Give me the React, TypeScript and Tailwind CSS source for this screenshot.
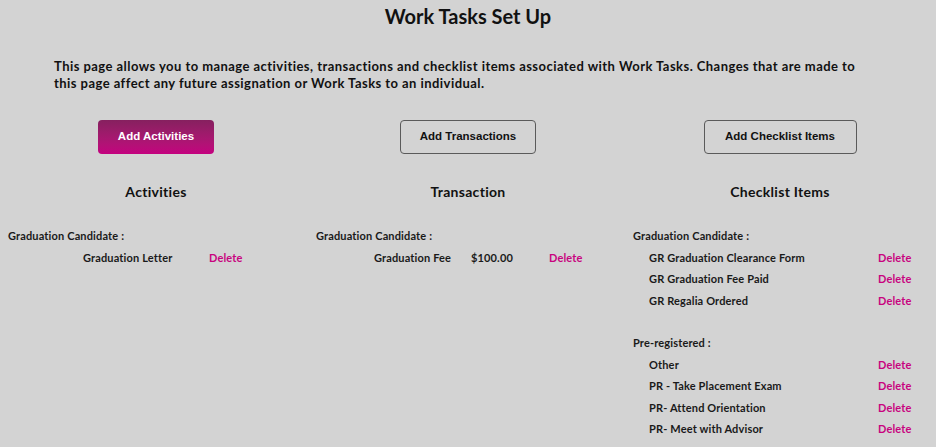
const gothic = "font-['Century_Gothic','Lato','Noto_Sans',sans-serif]";

type Row = { name: string; amount?: string };
type Group = { label: string; rows: Row[] };

function DeleteLink() {
  return <span className="text-[#c8037f] cursor-pointer">Delete</span>;
}

function Column({
  title,
  groups,
  labelPad,
  rowPad,
  nameWidth,
  amountWidth,
}: {
  title: string;
  groups: Group[];
  labelPad: string;
  rowPad: string;
  nameWidth: string;
  amountWidth?: string;
}) {
  return (
    <div className="flex flex-col">
      <h2 className="text-center text-[14px] leading-[20px] font-bold tracking-[0.3px] text-[#111]">{title}</h2>
      <div className="mt-[23px] flex flex-col gap-[21px] text-[11px] font-bold tracking-[0.15px] text-[#1a1a1a]">
        {groups.map((g) => (
          <div key={g.label} className="flex flex-col">
            <div className={`leading-[21.5px] ${labelPad}`}>{g.label}</div>
            {g.rows.map((r) => (
              <div key={r.name} className={`flex leading-[21.5px] ${rowPad}`}>
                <span className={nameWidth}>{r.name}</span>
                {amountWidth && <span className={amountWidth}>{r.amount}</span>}
                <DeleteLink />
              </div>
            ))}
          </div>
        ))}
      </div>
    </div>
  );
}

export default function App() {
  return (
    <div className={`min-h-[447px] w-[936px] bg-[#d3d3d3] ${gothic} text-[#111]`}>
      {/* Header */}
      <h1 className="pt-[2px] text-center text-[20px] leading-[28px] font-bold">Work Tasks Set Up</h1>

      <p className="mt-[28px] px-[54px] text-[13px] leading-[17px] font-bold tracking-[0.45px] whitespace-nowrap">
        This page allows you to manage activities, transactions and checklist items associated with Work Tasks. Changes that are made to
        <br />
        this page affect any future assignation or Work Tasks to an individual.
      </p>

      {/* Action buttons */}
      <div className="mt-[28px] grid grid-cols-3 font-['Liberation_Sans',Arial,sans-serif] text-[11.5px] font-bold">
        <div className="flex justify-center">
          <button className="h-[34px] w-[116px] rounded-[4px] bg-gradient-to-b from-[#86205f] to-[#c4007f] text-white">
            Add Activities
          </button>
        </div>
        <div className="flex justify-center">
          <button className="h-[34px] w-[136px] rounded-[4px] border border-[#5a5a5a] text-[#111]">
            Add Transactions
          </button>
        </div>
        <div className="flex justify-center">
          <button className="h-[34px] w-[153px] rounded-[4px] border border-[#5a5a5a] text-[#111]">
            Add Checklist Items
          </button>
        </div>
      </div>

      {/* Lists */}
      <div className="mt-[28px] grid grid-cols-3">
        <Column
          title="Activities"
          labelPad="pl-[8px]"
          rowPad="pl-[83px]"
          nameWidth="w-[126px]"
          groups={[{ label: "Graduation Candidate :", rows: [{ name: "Graduation Letter" }] }]}
        />
        <Column
          title="Transaction"
          labelPad="pl-[4px]"
          rowPad="pl-[62px]"
          nameWidth="w-[97px]"
          amountWidth="w-[78px]"
          groups={[{ label: "Graduation Candidate :", rows: [{ name: "Graduation Fee", amount: "$100.00" }] }]}
        />
        <Column
          title="Checklist Items"
          labelPad="pl-[9px]"
          rowPad="pl-[25px]"
          nameWidth="w-[229px]"
          groups={[
            {
              label: "Graduation Candidate :",
              rows: [
                { name: "GR Graduation Clearance Form" },
                { name: "GR Graduation Fee Paid" },
                { name: "GR Regalia Ordered" },
              ],
            },
            {
              label: "Pre-registered :",
              rows: [
                { name: "Other" },
                { name: "PR - Take Placement Exam" },
                { name: "PR- Attend Orientation" },
                { name: "PR- Meet with Advisor" },
              ],
            },
          ]}
        />
      </div>
    </div>
  );
}
